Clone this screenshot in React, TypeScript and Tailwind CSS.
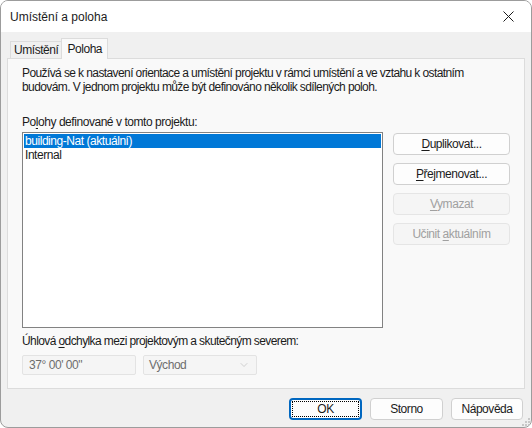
import { ChevronDown } from "lucide-react";

function Btn({
  children,
  disabled,
  className = "",
}: {
  children: React.ReactNode;
  disabled?: boolean;
  className?: string;
}) {
  return (
    <div
      className={`flex items-center justify-center rounded-[4px] border ${
        disabled
          ? "border-[#e5e5e5] bg-[#f5f5f5] text-[#a0a0a0]"
          : "border-[#d0d0d0] bg-[#fdfdfd] text-[#1b1b1b]"
      } ${className}`}
    >
      {children}
    </div>
  );
}

export default function App() {
  return (
    <div
      className="relative flex h-[428px] w-[532px] flex-col overflow-hidden rounded-[8px] border border-[#9c9c9c] bg-[#f0f0f0] text-[12px] leading-[14px] tracking-[-0.45px] text-[#1b1b1b]"
      style={{ fontFamily: '"Liberation Sans", sans-serif' }}
    >
      {/* Title bar */}
      <div className="flex h-[31px] shrink-0 items-center justify-between bg-white pl-[9px] pr-[17px]">
        <span className="text-[12px] tracking-normal">Umístění a poloha</span>
        <svg width="11" height="11" viewBox="0 0 11 11">
          <path d="M0.5 0.5 L10.5 10.5 M10.5 0.5 L0.5 10.5" stroke="#1b1b1b" strokeWidth="1" />
        </svg>
      </div>

      {/* Tabs */}
      <div className="flex items-end pl-[9px] pt-[6px]">
        <div className="-mr-px flex h-[17px] items-center border border-b-0 border-[#dcdcdc] bg-[#f0f0f0] px-[3px]">
          Umístění
        </div>
        <div className="relative z-10 -mb-px flex h-[21px] items-start border border-b-0 border-[#dcdcdc] bg-[#f9f9f9] px-[5px] pt-[3px]">
          Poloha
        </div>
      </div>

      {/* Panel */}
      <div className="mx-[6px] flex h-[331px] flex-col border border-[#dcdcdc] bg-[#f9f9f9] px-[14px] pt-[7px]">
        <p className="whitespace-nowrap tracking-[-0.6px]">
          Používá se k nastavení orientace a umístění projektu v rámci umístění a ve vztahu k ostatním
          <br />
          budovám. V jednom projektu může být definováno několik sdílených poloh.
        </p>

        <div className="mt-[21px]">
          Po<span className="underline underline-offset-2">l</span>ohy definované v tomto projektu:
        </div>

        <div className="mt-[3px] flex gap-[10px]">
          <div className="h-[196px] w-[361px] border border-[#828282] bg-white p-px">
            <div className="h-[14px] bg-[#0078d7] pl-[1px] text-white">building-Nat (aktuální)</div>
            <div className="h-[14px] pl-[1px]">Internal</div>
          </div>
          <div className="flex flex-col gap-[8px] pt-px">
            <Btn className="h-[22px] w-[117px]">
              <span>
                <span className="underline underline-offset-2">D</span>uplikovat...
              </span>
            </Btn>
            <Btn className="h-[22px] w-[117px]">
              <span>
                <span className="underline underline-offset-2">P</span>řejmenovat...
              </span>
            </Btn>
            <Btn disabled className="h-[22px] w-[117px]">
              <span>
                <span className="underline underline-offset-2">V</span>ymazat
              </span>
            </Btn>
            <Btn disabled className="h-[22px] w-[117px]">
              <span>
                Učinit <span className="underline underline-offset-2">a</span>ktuálním
              </span>
            </Btn>
          </div>
        </div>

        <div className="mt-[6px] tracking-[-0.6px]">
          Úhlová <span className="underline underline-offset-2">o</span>dchylka mezi projektovým a skutečným
          severem:
        </div>

        <div className="mt-[7px] flex gap-[7px]">
          <div className="flex h-[20px] w-[114px] items-center rounded-[2px] border border-[#e3e3e3] bg-[#f5f5f5] pl-[6px] text-[#6d6d6d]">
            37° 00' 00"
          </div>
          <div className="flex h-[20px] w-[114px] items-center justify-between rounded-[2px] border border-[#e3e3e3] bg-[#f5f5f5] pl-[5px] pr-[6px] text-[#6d6d6d]">
            <span>Východ</span>
            <ChevronDown size={12} strokeWidth={1} color="#a8a8a8" />
          </div>
        </div>
      </div>

      {/* Footer buttons */}
      <div className="flex justify-end gap-[8px] pr-[8px] pt-[9px]">
        <div className="flex h-[22px] w-[73px] items-center justify-center rounded-[4px] border-2 border-[#0067c0] bg-[#fdfdfd] p-px">
          <div className="flex h-full w-full items-center justify-center border border-dotted border-black">
            OK
          </div>
        </div>
        <Btn className="h-[22px] w-[73px]">Storno</Btn>
        <Btn className="h-[22px] w-[72px]">Nápověda</Btn>
      </div>

      {/* resize grip */}
      <svg className="absolute bottom-[1px] right-[1px]" width="8" height="8" viewBox="0 0 8 8">
        <rect x="6" y="0" width="2" height="2" fill="#c8c8c8" />
        <rect x="3" y="3" width="2" height="2" fill="#c8c8c8" />
        <rect x="6" y="3" width="2" height="2" fill="#c8c8c8" />
        <rect x="0" y="6" width="2" height="2" fill="#c8c8c8" />
        <rect x="3" y="6" width="2" height="2" fill="#c8c8c8" />
        <rect x="6" y="6" width="2" height="2" fill="#c8c8c8" />
      </svg>
    </div>
  );
}
